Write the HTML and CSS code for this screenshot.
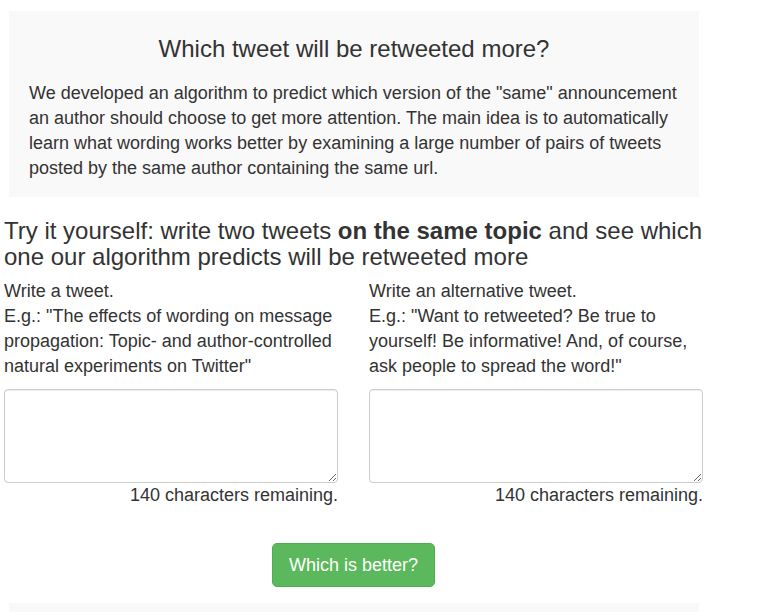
FILE: index.html
```html
<!DOCTYPE html>
<html>
<head>
<meta charset="utf-8">
<link rel="stylesheet" href="styles.css">
</head>
<body>
<div class="page">
  <div class="intro">
    <h1 class="intro-title">Which tweet will be retweeted more?</h1>
    <p class="intro-text">We developed an algorithm to predict which version of the "same" announcement an author should choose to get more attention. The main idea is to automatically learn what wording works better by examining a large number of pairs of tweets posted by the same author containing the same url.</p>
  </div>
  <h2 class="try">Try it yourself: write two tweets <b>on the same topic</b> and see which one our algorithm predicts will be retweeted more</h2>
  <div class="cols">
    <div class="col">
      <div class="label">Write a tweet.<br>E.g.: "The effects of wording on message propagation: Topic- and author-controlled natural experiments on Twitter"</div>
      <textarea class="tweet"></textarea>
      <div class="remaining">140 characters remaining.</div>
    </div>
    <div class="col">
      <div class="label">Write an alternative tweet.<br>E.g.: "Want to retweeted? Be true to yourself! Be informative! And, of course, ask people to spread the word!"</div>
      <textarea class="tweet"></textarea>
      <div class="remaining">140 characters remaining.</div>
    </div>
  </div>
  <div class="actions">
    <button class="btn">Which is better?</button>
  </div>
  <div class="result"></div>
</div>
</body>
</html>
```
FILE: styles.css
```css
html, body {
  margin: 0;
  padding: 0;
  background: #fff;
}
body {
  font-family: "Liberation Sans", Arial, sans-serif;
  color: #333;
  font-size: 18px;
  line-height: 25px;
}
.page {
  width: 699px;
  padding: 11px 0 0 4px;
}
.intro {
  margin-left: 5px;
  width: 650px;
  height: 186px;
  padding: 0 20px;
  background: #f9f9f9;
  box-sizing: content-box;
}
.intro-title {
  margin: 0;
  padding-top: 24px;
  font-size: 24px;
  line-height: 28px;
  font-weight: normal;
  text-align: center;
}
.intro-text {
  margin: 18px 0 0;
}
.try {
  margin: 21px 0 0;
  font-size: 24px;
  line-height: 26px;
  font-weight: normal;
}
.try b {
  font-weight: bold;
}
.cols {
  display: flex;
  gap: 31px;
  margin-top: 9px;
}
.col {
  width: 334px;
  display: flex;
  flex-direction: column;
}
.label {
  margin-bottom: 10px;
}
.tweet {
  box-sizing: border-box;
  width: 334px;
  height: 94px;
  margin: 0;
  border: 1px solid #ccc;
  border-radius: 4px;
  box-shadow: inset 0 1px 1px rgba(0,0,0,.075);
  font-family: inherit;
  font-size: 18px;
  padding: 6px 12px;
}
.remaining {
  text-align: right;
}
.actions {
  display: flex;
  justify-content: center;
  margin-top: 35px;
}
.btn {
  font-family: inherit;
  font-size: 18px;
  line-height: 24px;
  color: #fff;
  background: #5cb85c;
  border: 1px solid #4cae4c;
  border-radius: 5px;
  padding: 9px 16px;
}
.result {
  margin: 16px 0 0 5px;
  width: 690px;
  height: 9px;
  background: #f9f9f9;
}
```
